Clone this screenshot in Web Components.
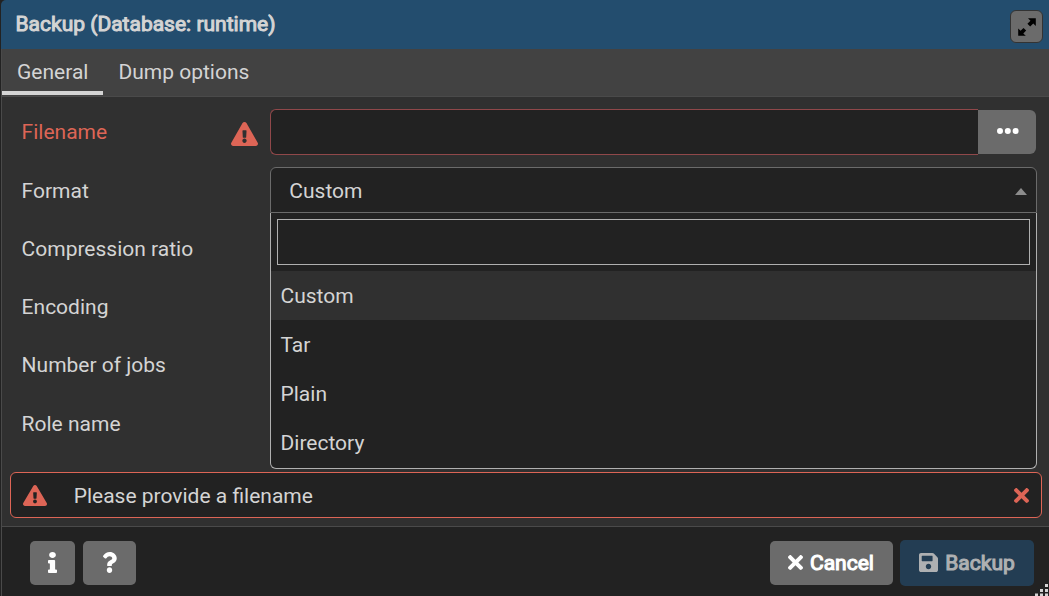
<!DOCTYPE html>
<html lang="en">
<head>
<meta charset="utf-8">
<title>Backup</title>
<style>
html,body{margin:0;height:100%;overflow:hidden;background:#222}
body{font:21px/32px Roboto,"Liberation Sans",sans-serif;color:#d4d4d4}
</style>
</head>
<body>
<backup-dialog></backup-dialog>
<script>
const ICONS = {
  warn: ['0 0 576 512','M569.517 440.013C587.975 472.007 564.806 512 527.94 512H48.054c-36.937 0-59.999-40.055-41.577-71.987L246.423 23.985c18.467-32.009 64.72-31.951 83.154 0l239.94 416.028zM288 354c-25.405 0-46 20.595-46 46s20.595 46 46 46 46-20.595 46-46-20.595-46-46-46zm-43.673-165.346l7.418 136c.347 6.364 5.609 11.346 11.982 11.346h48.546c6.373 0 11.635-4.982 11.982-11.346l7.418-136c.375-6.874-5.098-12.654-11.982-12.654h-63.383c-6.884 0-12.356 5.78-11.981 12.654z'],
  times: ['0 80 352 352','M242.72 256l100.07-100.07c12.28-12.28 12.28-32.19 0-44.48l-22.24-22.24c-12.28-12.28-32.19-12.28-44.48 0L176 189.28 75.93 89.21c-12.28-12.28-32.19-12.28-44.48 0L9.21 111.45c-12.28 12.28-12.28 32.19 0 44.48L109.28 256 9.21 356.07c-12.28 12.28-12.28 32.19 0 44.48l22.24 22.24c12.28 12.28 32.2 12.28 44.48 0L176 322.72l100.07 100.07c12.28 12.28 32.2 12.28 44.48 0l22.24-22.24c12.28-12.28 12.28-32.19 0-44.48L242.72 256z'],
  save: ['0 32 448 448','M433.941 129.941l-83.882-83.882A48 48 0 0 0 316.118 32H48C21.49 32 0 53.49 0 80v352c0 26.51 21.49 48 48 48h352c26.51 0 48-21.49 48-48V163.882a48 48 0 0 0-14.059-33.941zM224 416c-35.346 0-64-28.654-64-64 0-35.346 28.654-64 64-64s64 28.654 64 64c0 35.346-28.654 64-64 64zm96-304.52V212c0 6.627-5.373 12-12 12H76c-6.627 0-12-5.373-12-12V108c0-6.627 5.373-12 12-12h228.52c3.183 0 6.235 1.264 8.485 3.515l3.48 3.48A11.996 11.996 0 0 1 320 111.48z'],
  info: ['0 0 192 512','M20 424.229h20V279.771H20c-11.046 0-20-8.954-20-20V212c0-11.046 8.954-20 20-20h112c11.046 0 20 8.954 20 20v212.229h20c11.046 0 20 8.954 20 20V492c0 11.046-8.954 20-20 20H20c-11.046 0-20-8.954-20-20v-47.771c0-11.046 8.954-20 20-20zM96 0C56.235 0 24 32.235 24 72s32.235 72 72 72 72-32.235 72-72S135.764 0 96 0z'],
  question: ['0 0 384 512','M202.021 0C122.202 0 70.503 32.703 29.914 91.026c-7.363 10.58-5.093 25.086 5.178 32.874l43.138 32.709c10.373 7.865 25.132 6.026 33.253-4.148 25.049-31.381 43.63-49.449 82.757-49.449 30.764 0 68.816 19.799 68.816 49.631 0 22.552-18.617 34.134-48.993 51.164-35.423 19.86-82.299 44.576-82.299 106.405V320c0 13.255 10.745 24 24 24h72.471c13.255 0 24-10.745 24-24v-5.773c0-42.86 125.268-44.645 125.268-160.627C377.504 66.256 286.902 0 202.021 0zM192 373.459c-38.196 0-69.271 31.075-69.271 69.271 0 38.195 31.075 69.27 69.271 69.27s69.271-31.075 69.271-69.271-31.075-69.27-69.271-69.27z'],
  expand: ['0 0 20 20','M11 1.2h7.800V9l-2.500-2.500-3.100 3.100-2.800-2.800 3.100-3.100zM8.800 18.800H1.200V11.400l2.400 2.400 2.900-2.900 2.700 2.700-2.900 2.900z'],
  dots: ['0 0 22 6','M3 0a3 3 0 1 0 0 6a3 3 0 1 0 0-6zM10.8 0a3 3 0 1 0 0 6a3 3 0 1 0 0-6zM18.6 0a3 3 0 1 0 0 6a3 3 0 1 0 0-6z'],
  caret: ['0 0 12 7','M6 0L12 7H0z'],
  grip: ['0 0 13 12','M10 0h3v3h-3zM5 5h3v3h-3zM10 5h3v3h-3zM0 9.500h3v2.500h-3zM5 9.500h3v2.500h-3zM10 9.500h3v2.500h-3z']
};
function define(name, css, html) {
  customElements.define(name, class extends HTMLElement {
    constructor() {
      super();
      this.attachShadow({mode:'open'}).innerHTML =
        `<style>*{box-sizing:border-box}:host{box-sizing:border-box}${css}</style>${html}`;
    }
  });
}
customElements.define('ui-icon', class extends HTMLElement {
  connectedCallback() {
    if (this.shadowRoot) return;
    const [box, d] = ICONS[this.getAttribute('name')];
    this.attachShadow({mode:'open'}).innerHTML =
      `<style>:host{display:block;flex:none}svg{display:block;width:100%;height:100%;fill:currentColor}</style><svg viewBox="${box}" preserveAspectRatio="none" aria-hidden="true"><path d="${d}"/></svg>`;
  }
});
define('ui-button', `
:host{display:flex;align-items:center;justify-content:center;height:44px;border-radius:5px;background:#6b6b6b;color:#fff;-webkit-text-stroke:1.1px currentColor;white-space:nowrap}
:host([primary]){height:46px;background:#233d53;color:#aeb0b2}`, '<slot></slot>');
define('dialog-header', `
:host{display:flex;align-items:center;justify-content:space-between;height:49px;padding:0 6px 0 14.5px;background:#234d6e;border-radius:5px 0 0 0}
.title{-webkit-text-stroke:1px currentColor;margin-bottom:2px}
.max{display:flex;align-items:center;justify-content:center;width:33px;height:33px;margin-top:4px;border:1px solid #333;border-radius:6px;background:#6b6b6b;color:#000}
ui-icon{width:20px;height:20px;margin-top:1px;margin-left:1px}`,
'<span class="title"><slot></slot></span><span class="max"><ui-icon name="expand"></ui-icon></span>');
define('tab-item', `
:host{display:block;height:46px;padding:7px 15px 0;border-bottom:4px solid transparent;white-space:nowrap}
:host([active]){border-bottom-color:#d4d4d4}`, '<slot></slot>');
define('tab-bar', `:host{display:flex;height:48px;background:#424242;border-bottom:1px solid #4a4a4a}`, '<slot></slot>');
define('form-row', `
:host{display:grid;grid-template-columns:249px 1fr;height:46px}
.label{display:flex;justify-content:space-between;padding:7.3px 12px 0 .6px}
:host([invalid]) .label{color:#dd6556}`,
'<div class="label"><slot name="label"></slot><slot name="mark"></slot></div><slot></slot>');
define('file-field', `
:host{display:flex;height:46px;align-items:center}
.box{flex:1;height:46px;background:#222;border:1px solid #90484a;border-right:0;border-radius:6px 0 0 6px}
ui-button{width:58px;height:44px;border-radius:0 6px 6px 0;margin-right:1px}
ui-icon{width:22px;height:6px;margin-bottom:2px;margin-left:1px}`,
'<div class="box"></div><ui-button><ui-icon name="dots"></ui-icon></ui-button>');
define('select-option', `
:host{display:block;height:49px;padding:9px 9px 0 9.500px}
:host([selected]){background:#303030}`, '<slot></slot>');
define('select-field', `
:host{display:block;position:relative;height:46px}
.value{display:flex;align-items:center;justify-content:space-between;height:46px;padding:1px 9px 0 18.3px;background:#222;border:1px solid #6b6b6b;border-radius:6px 6px 0 0}
.value ui-icon{width:12px;height:7px;color:#8c8c8c;margin-top:2px}
.menu{position:absolute;z-index:2;left:0;right:0;top:46px;height:256px;overflow:hidden;background:#222;border:1px solid #b0b0b0;border-top:0;border-radius:0 0 6px 6px}
.search{height:46px;margin:6px;border:1px solid #b0b0b0}`,
'<div class="value"><slot name="value"></slot><ui-icon name="caret"></ui-icon></div><div class="menu"><div class="search"></div><slot></slot></div>');
define('error-bar', `
:host{display:flex;align-items:center;height:46px;margin:0 7px 0 8px;padding:0 12.500px 0 12px;background:#222;border:1px solid #dd6556;border-radius:6px}
.w{width:24px;height:21px;color:#dd6556}.x{width:15px;height:15px;color:#dd6556}
.text{flex:1;margin-left:26.7px;padding-top:2px}`,
'<ui-icon class="w" name="warn"></ui-icon><span class="text"><slot></slot></span><ui-icon class="x" name="times"></ui-icon>');
define('dialog-footer', `
:host{display:flex;align-items:center;height:70px;padding:3px 15px 1px 28px;background:#222;border-top:1px solid #4a4a4a;position:relative}
.info{width:45px;margin-right:8px}.help{width:53px}.info ui-icon{width:9px;height:21px}.help ui-icon{width:15px;height:21px}
.cancel{width:123px;margin-left:auto;margin-right:7px}.cancel ui-icon{width:15px;height:15px;margin-right:7px;margin-left:-1px}
.save{width:134px}.save ui-icon{width:19px;height:19px;margin-right:7px}
.grip{position:absolute;right:1px;bottom:0;width:13px;height:12px;color:#d4d4d4}`,
`<ui-button class="info"><ui-icon name="info"></ui-icon></ui-button><ui-button class="help"><ui-icon name="question"></ui-icon></ui-button>
<ui-button class="cancel"><ui-icon name="times"></ui-icon><span>Cancel</span></ui-button><ui-button class="save" primary><ui-icon name="save"></ui-icon><span>Backup</span></ui-button><ui-icon class="grip" name="grip"></ui-icon>`);
define('backup-dialog', `
:host{display:flex;flex-direction:column;height:596px;padding-left:1px;background:#222}
.main{display:flex;flex-direction:column;height:547px;border-left:1px solid #4a4a4a;background:#303030}
.form{display:flex;flex-direction:column;gap:12.25px;height:375px;padding:12px 12px 0 19px}
.mark{width:27px;height:24px;margin-top:5.7px}
dialog-footer{margin-top:auto}`,
`<dialog-header>Backup (Database: runtime)</dialog-header>
<div class="main">
<tab-bar><tab-item active>General</tab-item><tab-item>Dump options</tab-item></tab-bar>
<div class="form">
<form-row invalid><span slot="label">Filename</span><ui-icon class="mark" slot="mark" name="warn"></ui-icon><file-field></file-field></form-row>
<form-row><span slot="label">Format</span><select-field><span slot="value">Custom</span><select-option selected>Custom</select-option><select-option>Tar</select-option><select-option>Plain</select-option><select-option>Directory</select-option></select-field></form-row>
<form-row><span slot="label">Compression ratio</span></form-row>
<form-row><span slot="label">Encoding</span></form-row>
<form-row><span slot="label">Number of jobs</span></form-row>
<form-row><span slot="label">Role name</span></form-row>
</div>
<error-bar>Please provide a filename</error-bar>
<dialog-footer></dialog-footer>
</div>`);
</script>
</body>
</html>
